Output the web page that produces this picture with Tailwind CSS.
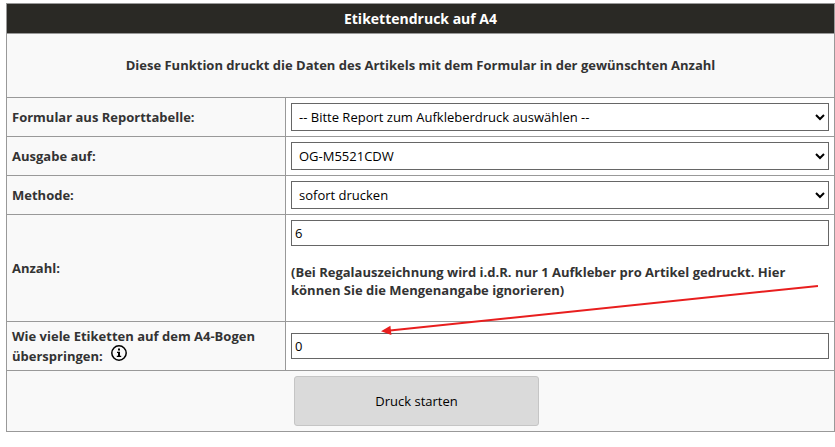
<!DOCTYPE html>
<html lang="de">
<head>
  <meta charset="UTF-8" />
  <meta name="viewport" content="width=device-width, initial-scale=1.0" />
  <title>Etikettendruck auf A4</title>
  <script src="https://cdn.jsdelivr.net/npm/@tailwindcss/browser@4"></script>
</head>
<body class="bg-white pt-[3px] pl-[6px] font-['Open_Sans',sans-serif] text-[13px] leading-[18px] text-[#333]">

  <form class="grid grid-cols-[278px_1fr] gap-px bg-[#999] border border-[#999]">

    <h1 class="col-span-2 bg-[#2a2925] text-white text-sm leading-[19px] font-bold text-center p-[5px]">Etikettendruck auf A4</h1>

    <p class="col-span-2 bg-[#f9f9f9] font-bold text-center px-[5px] pt-[22px] pb-[23px]">Diese Funktion druckt die Daten des Artikels mit dem Formular in der gewünschten Anzahl</p>

    <label for="report" class="flex items-center bg-[#f9f9f9] font-bold p-[5px]">Formular aus Reporttabelle:</label>
    <div class="bg-white p-[5px]">
      <select id="report" class="block w-full h-7 bg-white border border-[#666] px-[3px] text-black">
        <option>-- Bitte Report zum Aufkleberdruck auswählen --</option>
      </select>
    </div>

    <label for="drucker" class="flex items-center bg-[#f9f9f9] font-bold p-[5px]">Ausgabe auf:</label>
    <div class="bg-white p-[5px]">
      <select id="drucker" class="block w-full h-7 bg-white border border-[#666] px-[3px] text-black">
        <option>OG-M5521CDW</option>
      </select>
    </div>

    <label for="methode" class="flex items-center bg-[#f9f9f9] font-bold p-[5px]">Methode:</label>
    <div class="bg-white p-[5px]">
      <select id="methode" class="block w-full h-7 bg-white border border-[#666] px-[3px] text-black">
        <option>sofort drucken</option>
      </select>
    </div>

    <label for="anzahl" class="flex items-center bg-[#f9f9f9] font-bold p-[5px]">Anzahl:</label>
    <div class="relative bg-white p-[5px]">
      <input id="anzahl" type="text" value="6" class="block w-full h-[26px] bg-white border border-[#666] px-[3px] text-black" />
      <p class="font-bold py-[17px]">(Bei Regalauszeichnung wird i.d.R. nur 1 Aufkleber pro Artikel gedruckt. Hier können Sie die Mengenangabe ignorieren)</p>
      <!-- arrow down to the skip field -->
      <svg class="absolute z-10 right-4 top-[69px] w-[437px] h-[52px] pointer-events-none" viewBox="0 0 437 52" fill="none" aria-hidden="true">
        <path d="M437 2L9 46.400" stroke="#e81e1e" stroke-width="2" />
        <path d="M0 47.200L9.400 41.800L10.400 51Z" fill="#e81e1e" />
      </svg>
    </div>

    <div class="bg-[#f9f9f9] font-bold p-[5px]">
      <label for="skip">Wie viele Etiketten auf dem A4-Bogen<br />überspringen:</label>
      <svg class="inline-block align-baseline w-4 h-4 ml-[5px]" viewBox="0 0 16 16" fill="none" aria-hidden="true">
        <circle cx="8" cy="8" r="7.200" stroke="#000" stroke-width="1.500" />
        <path d="M7 3.600h2v2H7zM6 6.800h3v4h1.200v1.200H5.800v-1.200H7V8H6z" fill="#000" />
      </svg>
    </div>
    <div class="flex items-center bg-white p-[5px]">
      <input id="skip" type="text" value="0" class="block w-full h-[26px] bg-white border border-[#666] px-[3px] text-black" />
    </div>

    <div class="col-span-2 flex justify-center bg-[#f9f9f9] py-[5px] pr-2">
      <button type="button" class="w-[245px] h-[50px] bg-[#dadada] border border-[#c5c5c5] rounded-[3px] text-black">Druck starten</button>
    </div>

  </form>

</body>
</html>
